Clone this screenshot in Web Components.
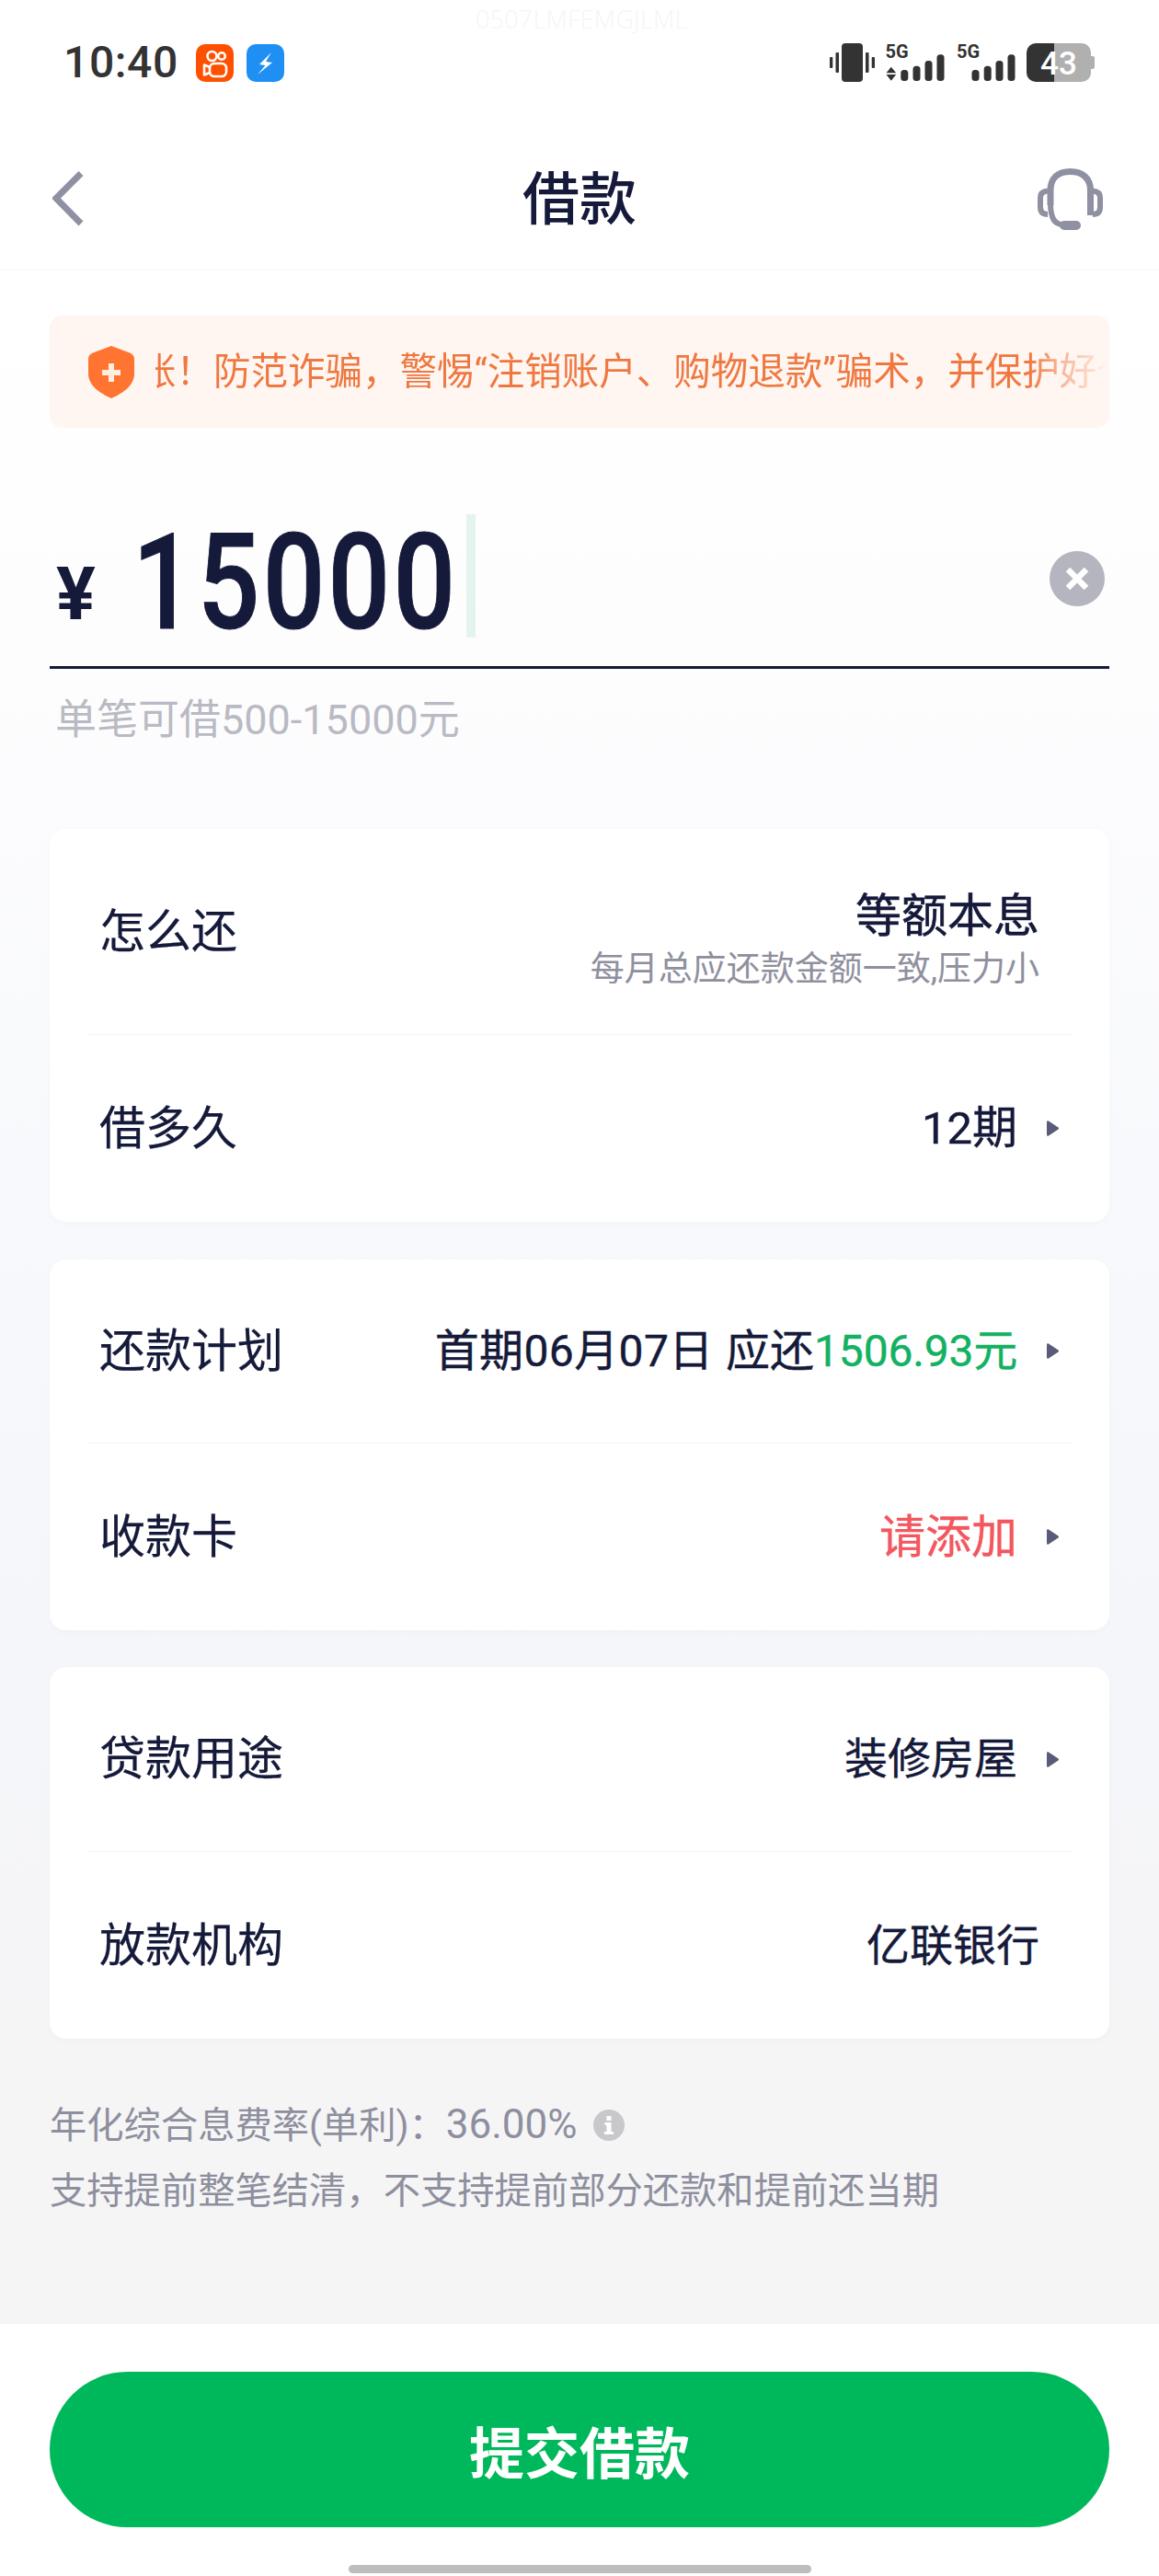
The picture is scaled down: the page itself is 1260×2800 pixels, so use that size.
<!DOCTYPE html>
<html lang="zh-CN">
<head>
<meta charset="utf-8">
<title>借款</title>
<style>
html,body{margin:0;padding:0}
body{font-family:Roboto,"Noto Sans CJK SC",sans-serif;color:#151a3a;background:#fff}
</style>
</head>
<body>
<loan-page>
  <status-bar></status-bar>
  <nav-bar>借款</nav-bar>
  <notice-banner>转账！防范诈骗，警惕“注销账户、购物退款”骗术，并保护好个人信息</notice-banner>
  <amount-input value="15000" hint="单笔可借500-15000元"></amount-input>
  <form-card style="--top:92px">
    <form-row style="--h:224px">
      <span slot="label">怎么还</span>
      <repay-method title-text="等额本息" sub="每月总应还款金额一致,压力小"></repay-method>
    </form-row>
    <form-row style="--h:203px;--fs:49px" arrow>
      <span slot="label">借多久</span>12期
    </form-row>
  </form-card>
  <form-card style="--top:41px">
    <form-row style="--h:200px;--fs:48px" arrow>
      <span slot="label">还款计划</span><span style="letter-spacing:.4px">首期06月07日</span><span style="margin-left:1.4px"> 应还</span><span style="color:#13b162;letter-spacing:-.2px">1506.93元</span>
    </form-row>
    <form-row style="--h:203px;--fs:50px" arrow>
      <span slot="label">收款卡</span><span style="color:#f3575f">请添加</span>
    </form-row>
  </form-card>
  <form-card style="--top:40px">
    <form-row style="--h:201px" arrow>
      <span slot="label">贷款用途</span>装修房屋
    </form-row>
    <form-row style="--h:203px">
      <span slot="label">放款机构</span>亿联银行
    </form-row>
  </form-card>
  <foot-note></foot-note>
  <submit-bar slot="footer">提交借款</submit-bar>
</loan-page>
<script>
function def(name, html, init){
  customElements.define(name, class extends HTMLElement{
    constructor(){super();this.attachShadow({mode:'open'}).innerHTML=html;}
    connectedCallback(){ if(init) init(this, this.shadowRoot); }
  });
}
def('loan-page',`<style>
:host{display:flex;flex-direction:column;width:1260px;height:2800px;overflow:hidden;
background:linear-gradient(180deg,#fff 0,#fff 300px,#fdfdfe 700px,#f8f9fc 1300px,#f5f6fa 1800px,#f5f5f6 2240px,#f5f5f6 100%)}
.main{flex:1;display:flex;flex-direction:column;min-height:0}
</style><div class="main"><slot></slot></div><slot name="footer"></slot>`);

def('status-bar',`<style>
:host{display:flex;position:relative;align-items:flex-start;height:139px;background:#fff;box-sizing:border-box;padding:47px 70px 0 69px;justify-content:space-between}
.wm{position:absolute;left:517px;top:3px;font:300 27px/36px "Open Sans",sans-serif;color:#f5f5f6;letter-spacing:.2px}
.left{display:flex;align-items:center;height:42px}
.time{font:500 48px/42px Roboto,sans-serif;color:#333;width:144px;letter-spacing:.6px}
.ic{display:block;width:41px;height:41px;margin-right:14px}
.right{display:block;width:288px;height:52px;margin-top:-10px}
text{font-family:Roboto,sans-serif}
</style>
<div class="wm">0507LMFEMGJLML</div>
<div class="left"><span class="time">10:40</span>
<svg class="ic" viewBox="0 0 41 41"><rect width="41" height="41" rx="10" fill="#ff5000"/><g fill="none" stroke="#fff" stroke-width="2.6"><circle cx="17.5" cy="13" r="5"/><circle cx="28" cy="13" r="3.8"/><rect x="15" y="21" width="18" height="14" rx="5"/><path d="M15 25 9 22.5V33.5L15 31" stroke-linejoin="round"/></g></svg>
<svg class="ic" viewBox="0 0 41 41"><rect width="41" height="41" rx="10" fill="#1f8ff4"/><path d="M27 9 14 22l6.500 1L12 33 28 20l-7-1z" fill="#fff"/></svg>
</div>
<svg class="right" viewBox="0 -10 288 52"><g fill="#333">
<rect x="13" y="0" width="23" height="42" rx="4"/><rect x="0" y="15" width="3.300" height="12" rx="1"/><rect x="6.500" y="10" width="3.500" height="22" rx="1"/><rect x="39" y="10" width="3.500" height="22" rx="1"/><rect x="45.700" y="15" width="3.300" height="12" rx="1"/>
<text x="60.500" y="15.500" font-size="20" font-weight="700">5G</text>
<path d="M61.500 32.300 66.800 25.700 72.200 32.300zM61.500 34 72.200 34 66.800 40.700z"/>
<rect x="77.300" y="29" width="8" height="12" rx="3.500"/><rect x="90.500" y="24.700" width="8" height="16.300" rx="3.500"/><rect x="103.500" y="19" width="8" height="22" rx="3.500"/><rect x="116.500" y="12.300" width="8" height="28.700" rx="3.500"/>
<text x="138" y="15.500" font-size="20" font-weight="700">5G</text>
<rect x="154.500" y="29" width="8" height="12" rx="3.500"/><rect x="167.700" y="24.700" width="8" height="16.300" rx="3.500"/><rect x="180.500" y="19" width="8" height="22" rx="3.500"/><rect x="193.500" y="12.300" width="8" height="28.700" rx="3.500"/>
</g>
<path d="M224 0H244V42H224a10 10 0 0 1-10-10V10a10 10 0 0 1 10-10z" fill="#333"/>
<path d="M244 0H274a10 10 0 0 1 10 10V14h2a2 2 0 0 1 2 2V26a2 2 0 0 1-2 2h-2V32a10 10 0 0 1-10 10H244z" fill="#b0b0b0"/>
<text x="249" y="33.500" text-anchor="middle" font-size="35" font-weight="500" fill="#fff">43</text>
</svg>`);

def('nav-bar',`<style>
:host{display:grid;grid-template-columns:1fr auto 1fr;align-items:center;height:154px;background:#fff;border-bottom:1px solid #f6f6f8;padding:0 61px 0 57px}
.t{font-size:62px;font-weight:500;line-height:80px;color:#151a3a;margin:4px 0 0 4px}
svg{display:block}
.r{justify-self:end}
</style>
<svg width="34" height="60" viewBox="0 0 34 60" fill="none"><path d="M31 2.500 4 29.500 31 57" stroke="#8f90a2" stroke-width="7"/></svg>
<span class="t"><slot></slot></span>
<svg class="r" width="71" height="67" viewBox="0 0 71 67" fill="none" stroke="#8f90a2">
<path d="M14 40V24C14 11 22 3.500 35.500 3.500S57.500 11 57.500 24V51" stroke-width="7"/>
<path d="M14 38C14 50 17 61 27 61" stroke-width="6"/>
<path d="M11 24.500C5 25 3 28 3 32V42C3 47 5 50 11 50" stroke-width="6"/>
<path d="M60 24.500C66 25 68 28 68 32V42C68 47 66 50 60 50" stroke-width="6"/>
<rect x="24" y="57" width="23" height="10" rx="5" fill="#8f90a2" stroke="none"/>
</svg>`);

def('notice-banner',`<style>
:host{display:flex;align-items:center;margin:49px 54px 0;height:122px;border-radius:14px;background:#fff5f1;padding:0 5px 0 42px;box-sizing:border-box}
svg{flex:none;display:block;margin-right:23px}
.clip{flex:1;overflow:hidden;white-space:nowrap;font-size:40.5px;line-height:56px;color:#ef7840;
-webkit-mask-image:linear-gradient(90deg,#000 0,#000 950px,rgba(0,0,0,.5) 985px,rgba(0,0,0,.2) 1020px,transparent 1032px);mask-image:linear-gradient(90deg,#000 0,#000 950px,rgba(0,0,0,.5) 985px,rgba(0,0,0,.2) 1020px,transparent 1032px)}
.in{display:inline-block;margin-left:-58.5px}
</style>
<svg width="50" height="57" viewBox="0 0 50 57"><path d="M25 0 45 7.500Q50 9.500 50 14V30C50 43 38 51 25 57 12 51 0 43 0 30V14Q0 9.500 5 7.500z" fill="#ff7430"/><path d="M22 19h6v7h7v6h-7v7h-6v-7h-7v-6h7z" fill="#ffeedd"/></svg>
<div class="clip"><span class="in"><slot></slot></span></div>`);

def('amount-input',`<style>
:host{display:block;margin:87px 54px 0}
.row{display:flex;align-items:center;height:175px;box-sizing:border-box;padding:0 5px 24px 7px;border-bottom:3px solid #151a3a}
.cur{font-size:80px;font-weight:700;line-height:80px;width:83px;margin-top:40px;color:#151a3a;flex:none}
.num{font-size:145px;font-weight:500;line-height:160px;color:#151a3a;display:block;letter-spacing:4px;transform:scaleX(.82);transform-origin:0 50%;width:363px;margin-top:14px;flex:none;white-space:nowrap;-webkit-text-stroke:1px #151a3a}
.caret{width:10px;height:134px;background:#e3f4ee;flex:none}
.sp{flex:1}
.x{display:block;margin-top:6px}
.hint{padding:30px 0 0 6px;font-size:45px;line-height:52px;color:#b9bac3}
</style>
<div class="row"><span class="cur">¥</span><span class="num"></span><span class="caret"></span><span class="sp"></span>
<svg class="x" width="60" height="60" viewBox="0 0 60 60"><circle cx="30" cy="30" r="30" fill="#b4b5bf"/><path d="M20 20 40 40M40 20 20 40" stroke="#fff" stroke-width="6.500"/></svg></div>
<div class="hint"></div>`,(el,r)=>{
  r.querySelector('.num').textContent=el.getAttribute('value');
  r.querySelector('.hint').textContent=el.getAttribute('hint');
});

def('form-card',`<style>
:host{display:block;margin:var(--top,40px) 54px 0;background:#fff;border-radius:18px;padding:0 40px 0 41px;box-shadow:0 2px 8px rgba(30,40,90,.025)}
</style><slot></slot>`);

def('form-row',`<style>
:host{display:flex;align-items:center;justify-content:space-between;height:var(--h,200px);box-sizing:border-box;padding:0 36px 0 13px;border-bottom:1px solid #f4f4f6}
:host(:last-child){border-bottom:none}
:host([arrow]){padding-right:14px}
.l{font-size:50px;line-height:60px;color:#151a3a;-webkit-text-stroke:.25px #151a3a}
.v{font-size:var(--fs,47px);line-height:60px;color:#151a3a;display:flex;align-items:center;white-space:nowrap;-webkit-text-stroke:.4px currentColor}
.tx{display:block}
.a{display:none;margin-left:31px;flex:none}
:host([arrow]) .a{display:block}
</style>
<span class="l"><slot name="label"></slot></span>
<span class="v"><span class="tx"><slot></slot></span><svg class="a" width="15" height="19" viewBox="0 0 15 19"><path d="M1 2.500Q1 .5 3 1.500L13.500 8.500Q14.500 9.500 13.500 10.500L3 17.500Q1 18.500 1 16.500z" fill="#5a5b78"/></svg></span>`);

def('repay-method',`<style>
:host{display:block;text-align:right;padding-top:25px}
.a{font-size:50px;line-height:58px;color:#151a3a;font-weight:400;-webkit-text-stroke:.6px #151a3a}
.b{font-size:37px;line-height:58px;color:#8f909e;white-space:nowrap;-webkit-text-stroke:0}
</style><div class="a"></div><div class="b"></div>`,(el,r)=>{
  r.querySelector('.a').textContent=el.getAttribute('title-text');
  r.querySelector('.b').textContent=el.getAttribute('sub');
});

def('foot-note',`<style>
:host{display:block;margin:58px 54px 0;font-size:40.3px;line-height:71px;color:#8e8f9e}
.l{display:flex;align-items:center;white-space:nowrap}
.n{font-size:44px}
svg{margin-left:17px;flex:none}
</style>
<div class="l"><span>年化综合息费率(单利)：<span class="n">36.00%</span></span><svg width="34" height="34" viewBox="0 0 34 34"><circle cx="17" cy="17" r="17" fill="#c8c8cc"/><rect x="14.500" y="7" width="5" height="5" fill="#fff"/><path d="M12.500 14h7v10h2.500v3H12v-3h2.500v-7h-2z" fill="#fff"/></svg></div>
<div class="l">支持提前整笔结清，不支持提前部分还款和提前还当期</div>`);

def('submit-bar',`<style>
:host{display:block;height:275px;box-sizing:border-box;background:#fff;padding:52px 54px 0;border-top:1px solid #f1f1f2;flex:none}
.b{height:169px;border-radius:85px;background:#00b85c;color:#fff;display:flex;align-items:center;justify-content:center;font-size:60px;font-weight:700}
.h{width:503px;height:9px;border-radius:5px;background:#bdbdbd;margin:41px auto 0}
</style><div class="b"><slot></slot></div><div class="h"></div>`);
</script>
</body>
</html>
